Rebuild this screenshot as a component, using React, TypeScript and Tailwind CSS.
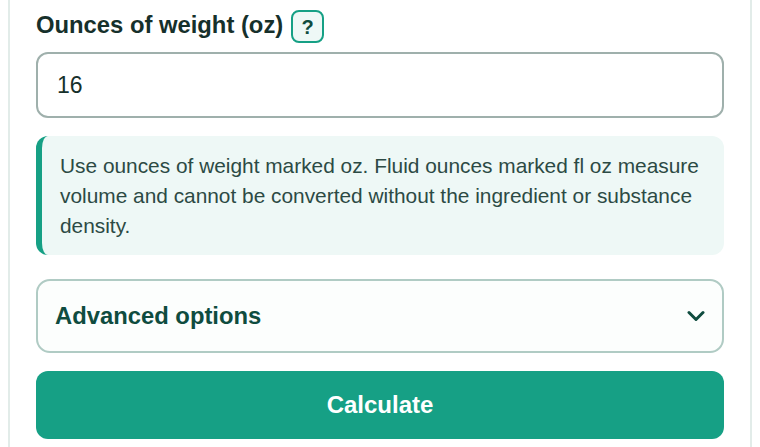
import React from 'react';

const sans = "font-['Liberation_Sans',Arial,sans-serif]";

export default function App() {
  return (
    <div className={`h-[447px] w-[760px] overflow-hidden bg-white ${sans}`}>
      <div className="mx-2 h-[447px] border-x-2 border-[#e2ece9] bg-white px-[26px] pt-[10px]">
        <div className="flex h-[33px] items-start gap-[8px]">
          <label className="text-[23.8px] font-bold leading-[30px] text-[#16302b]">Ounces of weight (oz)</label>
          <button className="flex h-[33px] w-[33px] items-center justify-center rounded-[8px] border-2 border-[#16a085] bg-[#eef8f6] text-[20px] font-bold text-[#0f4c3f]">
            ?
          </button>
        </div>

        <input
          readOnly
          value="16"
          className="mt-[9px] block h-[66px] w-full rounded-[12px] border-2 border-[#9fb0ac] bg-white px-[19px] text-[23px] text-[#16302b] outline-none"
        />

        <div className="mt-[18px] h-[119px] rounded-[12px] border-l-[6px] border-[#16a085] bg-[#eef8f6] px-[18px] py-[15px] text-[20.87px] leading-[30px] text-[#2c4a44]">
          Use ounces of weight marked oz. Fluid ounces marked fl oz measure volume and cannot be converted without the ingredient or substance density.
        </div>

        <div className="mt-[24px] flex h-[74px] items-center justify-between rounded-[14px] border-2 border-[#b0cbc4] bg-[#fcfefd] px-[17px]">
          <span className="text-[23.8px] font-bold text-[#0f4c3f]">Advanced options</span>
          <svg width="18" height="12" viewBox="0 0 18 12" fill="none" stroke="#0f4c3f" strokeWidth="3" strokeLinecap="round" strokeLinejoin="round">
            <path d="M2 2.5 9 9.5 16 2.5" />
          </svg>
        </div>

        <button className="mt-[18px] flex h-[68px] w-full items-center justify-center rounded-[12px] bg-[#16a085] text-[24px] font-bold text-white">
          Calculate
        </button>
      </div>
    </div>
  );
}
